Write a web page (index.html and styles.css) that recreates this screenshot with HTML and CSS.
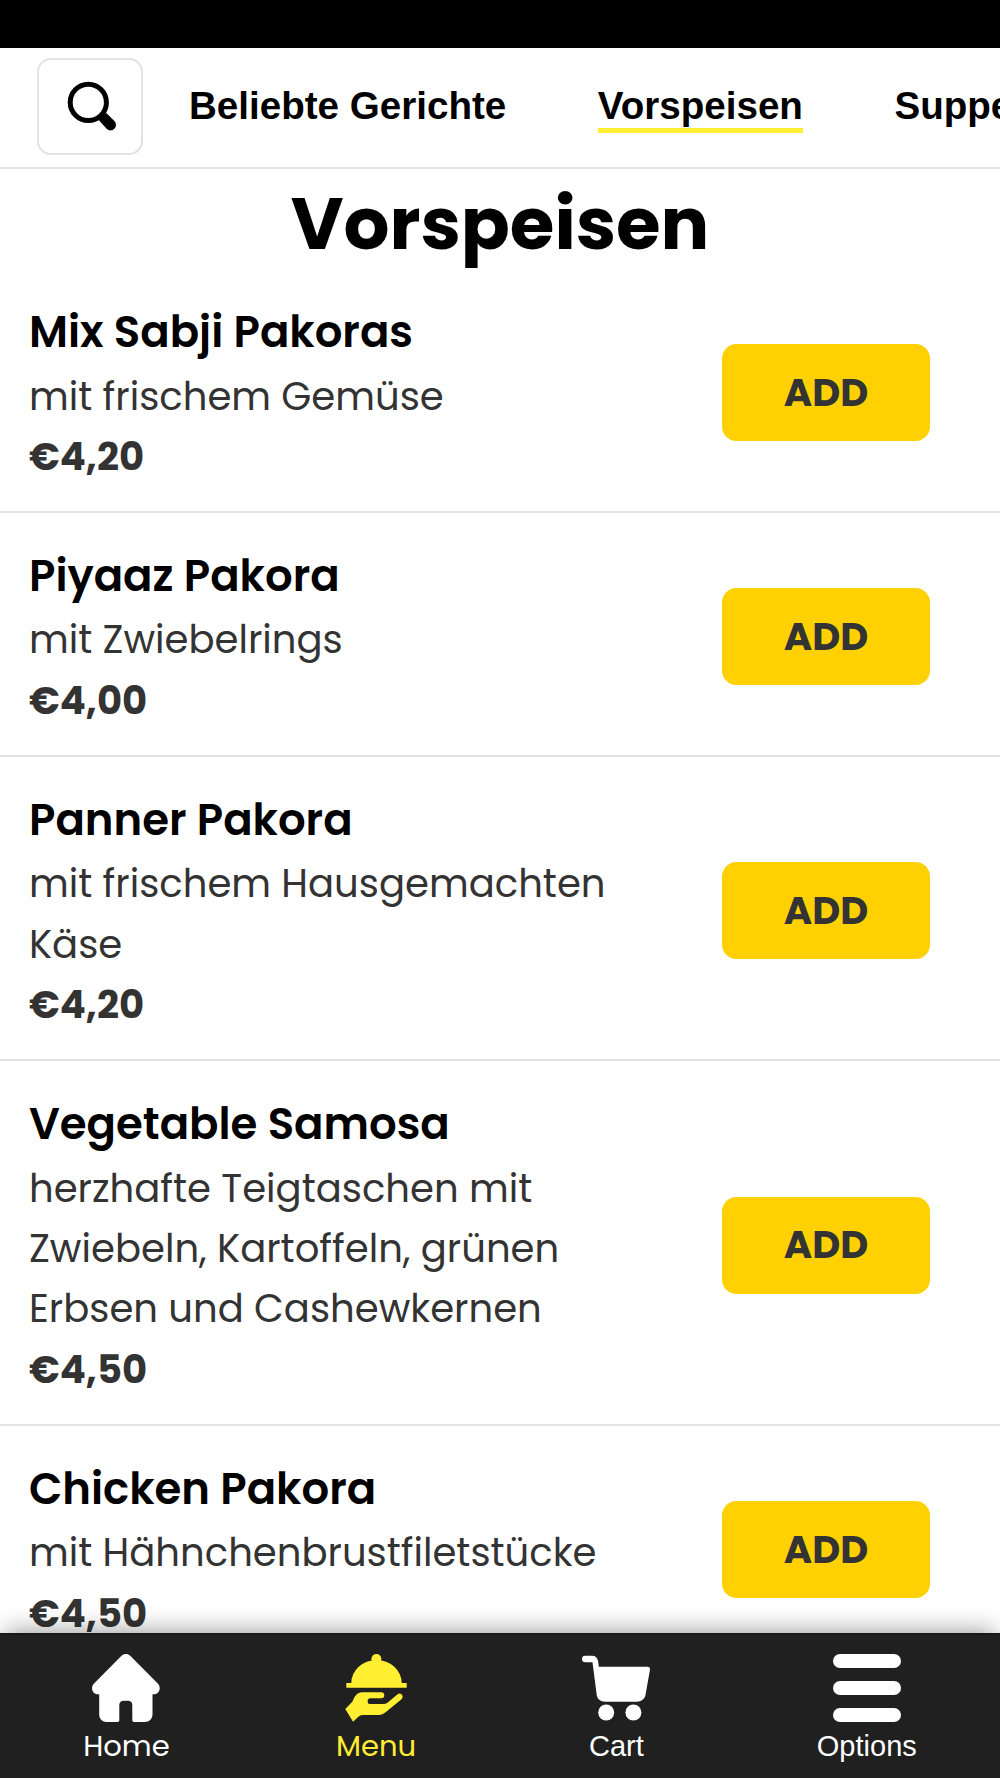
FILE: index.html
```html
<!DOCTYPE html>
<html lang="de">
<head>
<meta charset="utf-8">
<title>Vorspeisen</title>
<link rel="stylesheet" href="styles.css">
</head>
<body>
<div class="screen">
  <div class="status-bar"></div>
  <header class="categories">
    <button class="search" aria-label="Suche">
      <svg width="50" height="50" viewBox="0 0 50 50"><circle cx="21.3" cy="21.4" r="18.1" fill="none" stroke="#000" stroke-width="5"/><path d="M31.7 39 39 31.7 47.4 40A5.5 5.5 0 0 1 39.6 47.8Z"/></svg>
    </button>
    <nav class="tabs">
      <a class="tab">Beliebte Gerichte</a>
      <a class="tab active">Vorspeisen</a>
      <a class="tab">Suppen</a>
    </nav>
  </header>
  <main class="menu">
    <h1 class="heading">Vorspeisen</h1>
    <article class="dish">
      <div class="info"><h2 class="name">Mix Sabji Pakoras</h2><p class="desc">mit frischem Gemüse</p><p class="price">€4,20</p></div>
      <button class="add">ADD</button>
    </article>
    <article class="dish">
      <div class="info"><h2 class="name">Piyaaz Pakora</h2><p class="desc">mit Zwiebelrings</p><p class="price">€4,00</p></div>
      <button class="add">ADD</button>
    </article>
    <article class="dish">
      <div class="info"><h2 class="name">Panner Pakora</h2><p class="desc">mit frischem Hausgemachten Käse</p><p class="price">€4,20</p></div>
      <button class="add">ADD</button>
    </article>
    <article class="dish">
      <div class="info"><h2 class="name">Vegetable Samosa</h2><p class="desc">herzhafte Teigtaschen mit Zwiebeln, Kartoffeln, grünen Erbsen und Cashewkernen</p><p class="price">€4,50</p></div>
      <button class="add">ADD</button>
    </article>
    <article class="dish">
      <div class="info"><h2 class="name">Chicken Pakora</h2><p class="desc">mit Hähnchenbrustfiletstücke</p><p class="price">€4,50</p></div>
      <button class="add">ADD</button>
    </article>
  </main>
  <nav class="bottom-bar">
    <a class="link">
      <svg class="icon" viewBox="0 0 68 68"><path d="M29.5 1.8C32-.6 35.7-.6 38.2 1.8L66 29.8C69.5 33.6 67.3 40.3 61.8 40.3H60.5V60.5C60.5 65 57 68 53 68H42C41 68 40.3 67.3 40.3 66.3V51C40.3 48.5 38.6 46.7 36 46.7H31.6C29 46.7 27.3 48.5 27.3 51V66.3C27.3 67.3 26.6 68 25.6 68H14.5C10.5 68 7.2 65 7.2 60.5V40.3H5.9C.3 40.3-1.7 33.6 1.8 29.8Z"/></svg>
      <span>Home</span>
    </a>
    <a class="link current">
      <svg class="icon" viewBox="0 0 68 68"><circle cx="34.4" cy="5" r="5"/><path d="M9.3 29A25.2 23 0 0 1 59.7 29H64.7V33.7H4.3V29Z"/><path d="M3.3 55 10.5 47.5C12.5 43 14.5 38.3 20.5 38.3H39.3A3 3 0 0 1 39.3 44.3H28.5A2.85 2.85 0 0 0 28.5 50H40.5C42.8 50 44 49.7 45.8 48.4L55.3 40.4C58.5 37.8 62.3 41.8 59.8 44.9L44.5 57.6C41.8 60 40 61 36.5 61H21C18.5 61 17.5 61.8 15.5 63.6L11 67.7Z"/></svg>
      <span>Menu</span>
    </a>
    <a class="link plain">
      <svg class="icon" viewBox="0 0 68 68"><path d="M3.3 1.7H10.5C14 1.7 16 5 16.3 8.5L16.8 12.7H65.5C67.3 12.7 68.2 14 68 15.6L63.5 41C62.7 45 59 47.7 55 47.7H23C18.5 47.7 15 44.7 14.7 40.7L10.5 8.3H3.3A3.3 3.3 0 0 1 3.3 1.7Z"/><circle cx="24.2" cy="58.5" r="8"/><circle cx="51.4" cy="58.5" r="8"/></svg>
      <span>Cart</span>
    </a>
    <a class="link plain">
      <svg class="icon" viewBox="0 0 68 68"><rect width="68" height="14" rx="7"/><rect y="27" width="68" height="14" rx="7"/><rect y="54" width="68" height="14" rx="7"/></svg>
      <span>Options</span>
    </a>
  </nav>
</div>
</body>
</html>
```

FILE: styles.css
```css
* { box-sizing: border-box; }
body { margin: 0; background: #fff; color: #000; font-family: Poppins, Inter, sans-serif; }
h1, h2, p { margin: 0; }
button { margin: 0; font: inherit; }

.screen { display: flex; flex-direction: column; width: 1000px; height: 1778px; overflow: hidden; }
.status-bar { flex: none; height: 48px; background: #000; }

.categories { flex: none; display: flex; align-items: flex-start; height: 121px; padding: 10px 0 0 36.5px; border-bottom: 2px solid #e3e3e3; overflow: hidden; }
.search { flex: none; display: flex; width: 106px; height: 97px; padding: 21px 0 0 28.5px; background: #fff; border: 2px solid #e3e3e3; border-radius: 14px; }
.tabs { flex: none; display: flex; gap: 91.5px; padding: 26px 0 0 46.5px; }
.tab { border-bottom: 5px solid transparent; font: 700 38.6px/44px "Liberation Sans", Arial, sans-serif; white-space: nowrap; }
.tab.active { border-color: #ffee32; }

.menu { flex: 1; min-height: 0; overflow: hidden; }
.heading { padding: 10px 0 .8px; font-size: 72.3px; font-weight: 700; line-height: 89px; text-align: center; }
.dish { display: flex; align-items: center; justify-content: space-between; padding: 29.3px 70px 23.4px 29px; border-bottom: 2px solid #e3e3e3; }
.info { width: 610px; }
.name { font-size: 43.4px; font-weight: 600; line-height: 68.4px; }
.desc, .price { color: #333; font-size: 38.6px; line-height: 60.4px; }
.price { font-weight: 700; }
.add { width: 208px; height: 96.6px; padding: 0; border: 0; border-radius: 14.5px; background: #ffd103; color: #333; font-size: 38.6px; font-weight: 700; line-height: 60px; }

.bottom-bar { flex: none; position: relative; display: flex; justify-content: space-around; height: 145px; padding-top: 19.2px; border-top: 2px solid #181818; background: #202020; box-shadow: 0 -5px 24px -5px rgba(0, 0, 0, .45); }
.link { display: flex; flex-direction: column; align-items: center; gap: 2.8px; color: #fff; font-size: 29px; line-height: 43.5px; }
.link.current { color: #ffee32; }
.link.plain { font-family: "Liberation Sans", Arial, sans-serif; }
.icon { width: 68px; height: 68px; fill: currentColor; }
```
